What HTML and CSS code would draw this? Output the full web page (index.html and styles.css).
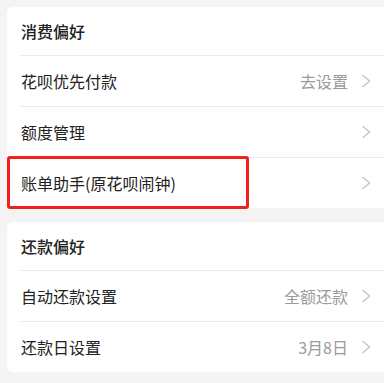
FILE: index.html
```html
<!DOCTYPE html>
<html lang="zh-CN">
<head>
  <meta charset="UTF-8" />
  <meta name="viewport" content="width=device-width, initial-scale=1.0"/>
  <title>花呗设置</title>
  <link rel="stylesheet" href="styles.css">
</head>
<body>

<div class="page">
  <div class="card">
    <div class="card-title">消费偏好</div>
    <div class="row">
      <span class="label">花呗优先付款</span>
      <span class="value">去设置</span>
      <svg class="arrow" width="10" height="14" viewBox="0 0 10 14"><polyline points="1.5,1 8.5,7 1.5,13" /></svg>
    </div>
    <div class="row">
      <span class="label">额度管理</span>
      <svg class="arrow" width="10" height="14" viewBox="0 0 10 14"><polyline points="1.5,1 8.5,7 1.5,13" /></svg>
    </div>
    <div class="row marked">
      <span class="label">账单助手(原花呗闹钟)</span>
      <svg class="arrow" width="10" height="14" viewBox="0 0 10 14"><polyline points="1.5,1 8.5,7 1.5,13" /></svg>
      <div class="highlight"></div>
    </div>
  </div>

  <div class="card">
    <div class="card-title">还款偏好</div>
    <div class="row">
      <span class="label">自动还款设置</span>
      <span class="value">全额还款</span>
      <svg class="arrow" width="10" height="14" viewBox="0 0 10 14"><polyline points="1.5,1 8.5,7 1.5,13" /></svg>
    </div>
    <div class="row">
      <span class="label">还款日设置</span>
      <span class="value">3月8日</span>
      <svg class="arrow" width="10" height="14" viewBox="0 0 10 14"><polyline points="1.5,1 8.5,7 1.5,13" /></svg>
    </div>
  </div>
</div>

</body>
</html>
```

FILE: styles.css
```css
html, body {
  margin: 0;
  padding: 0;
  background: #f4f4f4;
  overflow: hidden;
}
body {
  font-family: "Noto Sans CJK SC", "Noto Sans", sans-serif;
  color: #222;
}
.page {
  padding: 7px 0 0 7px;
}
.card {
  background: #fff;
  border-radius: 6px 0 0 6px;
  margin-bottom: 14px;
  margin-right: -6px;
}
.card-title {
  height: 48px;
  line-height: 48px;
  padding-left: 14px;
  font-size: 16px;
  font-weight: 500;
}
.row {
  position: relative;
  display: flex;
  align-items: center;
  height: 51px;
  margin-left: 13px;
  padding-left: 1px;
  padding-right: 19px;
  border-top: 1px solid #ececec;
  box-sizing: border-box;
}
.label {
  flex: 1;
  font-size: 16px;
}
.value {
  font-size: 16px;
  color: #9a9a9a;
  margin-right: 13px;
}
.arrow polyline {
  fill: none;
  stroke: #c6c6c6;
  stroke-width: 1.5;
}
.highlight {
  position: absolute;
  left: -13px;
  top: -2px;
  width: 242px;
  height: 53px;
  border: 3px solid #f2201b;
  border-radius: 3px;
  box-sizing: border-box;
}
```
